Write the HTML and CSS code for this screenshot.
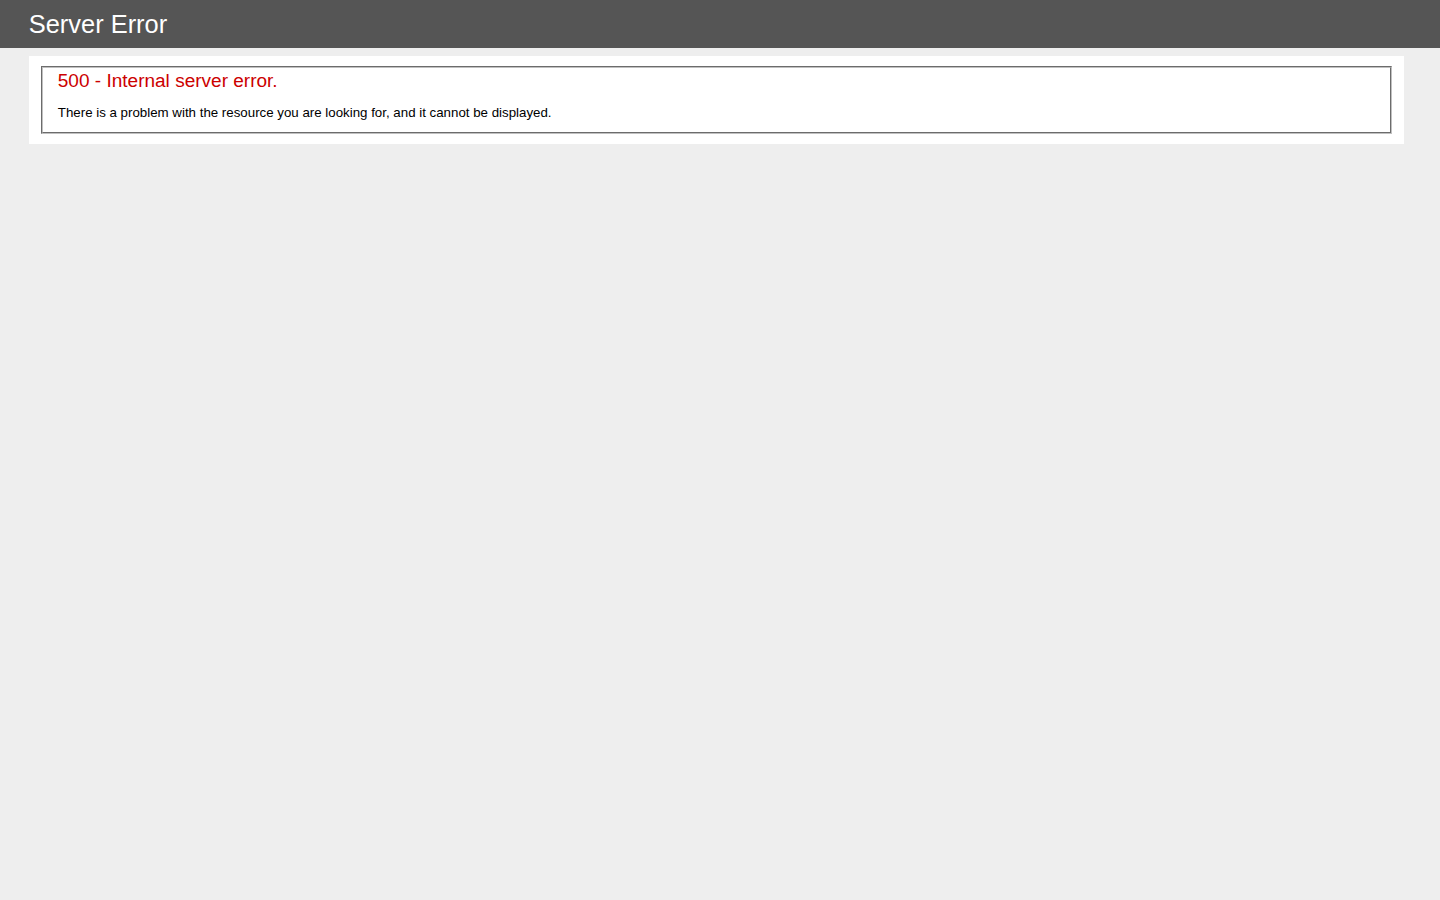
FILE: index.html
```html
<!DOCTYPE html>
<html lang="en">
<head>
  <meta charset="UTF-8">
  <title>500 - Internal server error.</title>
  <link rel="stylesheet" href="styles.css">
</head>
<body>
  <div class="header"><h1>Server Error</h1></div>
  <div class="content">
    <div class="content-container">
      <fieldset>
        <h2>500 - Internal server error.</h2>
        <h3>There is a problem with the resource you are looking for, and it cannot be displayed.</h3>
      </fieldset>
    </div>
  </div>
</body>
</html>
```

FILE: styles.css
```css
body {
  margin: 0;
  font-size: 0.7em;
  font-family: "Liberation Sans", Arial, Helvetica, sans-serif;
  background: #eeeeee;
}

fieldset {
  margin: 0 2px;
  padding: 0 15px 10px 15px;
  border: 2px groove #c0c0c0;
}

h1 {
  font-size: 2.27em;
  line-height: 36px;
  font-weight: normal;
  margin: 0;
  color: #fff;
}

h2 {
  font-size: 1.7em;
  line-height: 26px;
  font-weight: normal;
  margin: 0;
  color: #cc0000;
}

h3 {
  font-size: 13.3px;
  line-height: 18px;
  font-weight: normal;
  margin: 10px 0 0 0;
  color: #000;
}

.header {
  width: 96%;
  margin: 0;
  padding: 6px 2%;
  color: #fff;
  background-color: #555555;
}

.content {
  margin: 0 0 0 2%;
}

.content-container {
  background: #fff;
  width: 96%;
  margin-top: 8px;
  padding: 10px;
}
```
